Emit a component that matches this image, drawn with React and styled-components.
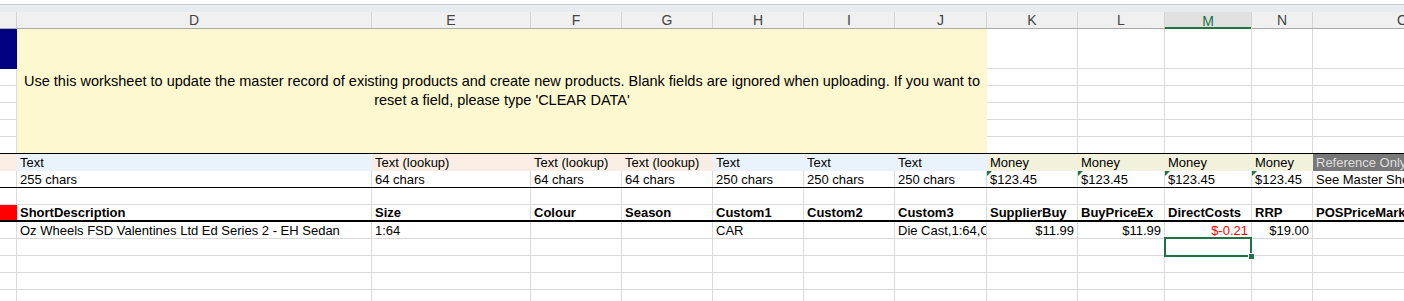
import styled, { createGlobalStyle } from "styled-components";

const COLS = "17px 355px 159px 91px 91px 91px 91px 92px 91px 87px 87px 61px 180px";
const LETTERS = ["", "D", "E", "F", "G", "H", "I", "J", "K", "L", "M", "N", "O"];
const GRID = "#dadada";
const GREEN = "#217346";
const BLUE = "#eaf3fc";
const PEACH = "#faeee4";
const OLIVE = "#f2f2dc";
const SLATE = "#787878";

const GlobalStyle = createGlobalStyle`
  html, body {
    margin: 0;
    padding: 0;
    background: #fff;
  }
  body {
    font-family: "Liberation Sans", Arial, sans-serif;
    overflow: hidden;
  }
`;

const Sheet = styled.div`
  width: 1404px;
  height: 301px;
  overflow: hidden;
  background: #fff;
`;

const Chrome = styled.div`
  height: 7px;
  margin-top: 4px;
  border-top: 1px solid #c8c8c8;
  background: #e8ebef;
`;

const ColumnBar = styled.div`
  display: grid;
  grid-template-columns: ${COLS};
  height: 17px;
  box-sizing: border-box;
  background: #f0f0f0;
  border-bottom: 1px solid #ababab;
`;

const Letter = styled.div`
  display: flex;
  align-items: center;
  justify-content: center;
  box-sizing: border-box;
  font-size: 14px;
  color: ${({ $active }) => ($active ? GREEN : "#444")};
  background: ${({ $active }) => ($active ? "#e1e1e1" : "transparent")};
  border-right: 1px solid #d4d4d4;
  margin-bottom: ${({ $active }) => ($active ? "-1px" : "0")};
  box-shadow: ${({ $active }) => ($active ? `inset 0 -2px 0 ${GREEN}` : "none")};
`;

const TopBlock = styled.div`
  display: grid;
  grid-template-columns: ${COLS};
  grid-template-rows: 40px 17px 17px 17px 17px 16px;
  border-bottom: 1px solid #000;
`;

const Notice = styled.div`
  grid-column: 2 / 9;
  grid-row: 1 / 7;
  display: flex;
  align-items: center;
  justify-content: center;
  padding: 0 4px;
  background: #fef8d0;
  text-align: center;
  font-size: 14.5px;
  line-height: 19px;
  color: #000;
`;

const Band = styled.div`
  display: grid;
  grid-template-columns: ${COLS};
  height: 17px;
  box-sizing: border-box;
  border-bottom: ${({ $rule }) => ($rule ? `${$rule}px solid #000` : "none")};
`;

const Cell = styled.div`
  position: relative;
  box-sizing: border-box;
  min-width: 0;
  display: flex;
  align-items: center;
  justify-content: ${({ $align }) => ($align === "right" ? "flex-end" : "flex-start")};
  padding: 0 3px;
  font-size: 13px;
  line-height: 15px;
  white-space: nowrap;
  overflow: hidden;
  font-weight: ${({ $bold }) => ($bold ? 700 : 400)};
  color: ${({ $ink }) => $ink || "#000"};
  background: ${({ $fill }) => $fill || "#fff"};
  border-right: ${({ $fill }) => ($fill ? "none" : `1px solid ${GRID}`)};
  border-bottom: ${({ $fill, $open }) => ($fill || $open ? "none" : `1px solid ${GRID}`)};
`;

const Flagged = styled(Cell)`
  &::before {
    content: "";
    position: absolute;
    left: 0;
    top: 0;
    border-top: 5px solid ${GREEN};
    border-right: 5px solid transparent;
  }
`;

const Picked = styled(Cell)`
  overflow: visible;
  z-index: 1;
  &::after {
    content: "";
    position: absolute;
    left: -1px;
    top: -2px;
    right: -1px;
    bottom: -2px;
    border: 2px solid ${GREEN};
  }
  &::before {
    content: "";
    position: absolute;
    right: -4px;
    bottom: -5px;
    width: 5px;
    height: 5px;
    background: ${GREEN};
    border: 1px solid #fff;
    z-index: 2;
  }
`;

const typeRow = [
  { fill: PEACH },
  { text: "Text", fill: BLUE },
  { text: "Text (lookup)", fill: PEACH },
  { text: "Text (lookup)", fill: PEACH },
  { text: "Text (lookup)", fill: PEACH },
  { text: "Text", fill: BLUE },
  { text: "Text", fill: BLUE },
  { text: "Text", fill: BLUE },
  { text: "Money", fill: OLIVE },
  { text: "Money", fill: OLIVE },
  { text: "Money", fill: OLIVE },
  { text: "Money", fill: OLIVE },
  { text: "Reference Only", fill: SLATE, ink: "#dedede" },
];

const limitRow = [
  "",
  "255 chars",
  "64 chars",
  "64 chars",
  "64 chars",
  "250 chars",
  "250 chars",
  "250 chars",
  "$123.45",
  "$123.45",
  "$123.45",
  "$123.45",
  "See Master Sheet",
];

const fieldRow = [
  "",
  "ShortDescription",
  "Size",
  "Colour",
  "Season",
  "Custom1",
  "Custom2",
  "Custom3",
  "SupplierBuy",
  "BuyPriceEx",
  "DirectCosts",
  "RRP",
  "POSPriceMarkup",
];

const productRow = [
  {},
  { text: "Oz Wheels FSD Valentines Ltd Ed Series 2 - EH Sedan" },
  { text: "1:64" },
  {},
  {},
  { text: "CAR" },
  {},
  { text: "Die Cast,1:64,Car" },
  { text: "$11.99", align: "right" },
  { text: "$11.99", align: "right" },
  { text: "$-0.21", align: "right", ink: "#ff0000" },
  { text: "$19.00", align: "right" },
  {},
];

function EmptyRow({ pick }) {
  return (
    <Band>
      {LETTERS.map((l, i) =>
        i === pick ? <Picked key={i} /> : <Cell key={i} />
      )}
    </Band>
  );
}

export default function App() {
  const sideCells = [9, 10, 11, 12, 13];
  return (
    <Sheet>
      <GlobalStyle />
      <Chrome />
      <ColumnBar>
        {LETTERS.map((l, i) => (
          <Letter key={i} $active={l === "M"}>
            {l}
          </Letter>
        ))}
      </ColumnBar>

      <TopBlock>
        <Cell $fill="#000080" />
        <Notice>
          Use this worksheet to update the master record of existing products and create new
          products. Blank fields are ignored when uploading. If you want to reset a field, please
          type 'CLEAR DATA'
        </Notice>
        {[0, 1, 2, 3, 4, 5].map((r) => (
          <>
            {r > 0 && <Cell key={`c${r}`} $open={r === 5} />}
            {sideCells.map((c) => (
              <Cell key={`${r}-${c}`} $open={r === 5} />
            ))}
          </>
        ))}
      </TopBlock>

      <Band>
        {typeRow.map((c, i) => (
          <Cell key={i} $fill={c.fill} $ink={c.ink}>
            {c.text}
          </Cell>
        ))}
      </Band>

      <Band $rule={1}>
        {limitRow.map((t, i) =>
          i >= 8 && i <= 11 ? (
            <Flagged key={i} $open>
              {t}
            </Flagged>
          ) : (
            <Cell key={i} $open>
              {t}
            </Cell>
          )
        )}
      </Band>

      <EmptyRow />

      <Band $rule={2}>
        {fieldRow.map((t, i) => (
          <Cell key={i} $open $bold $fill={i === 0 ? "#ff0000" : undefined}>
            {t}
          </Cell>
        ))}
      </Band>

      <Band>
        {productRow.map((c, i) => (
          <Cell key={i} $align={c.align} $ink={c.ink}>
            {c.text}
          </Cell>
        ))}
      </Band>

      <EmptyRow pick={10} />
      <EmptyRow />
      <EmptyRow />
      <EmptyRow />
    </Sheet>
  );
}
